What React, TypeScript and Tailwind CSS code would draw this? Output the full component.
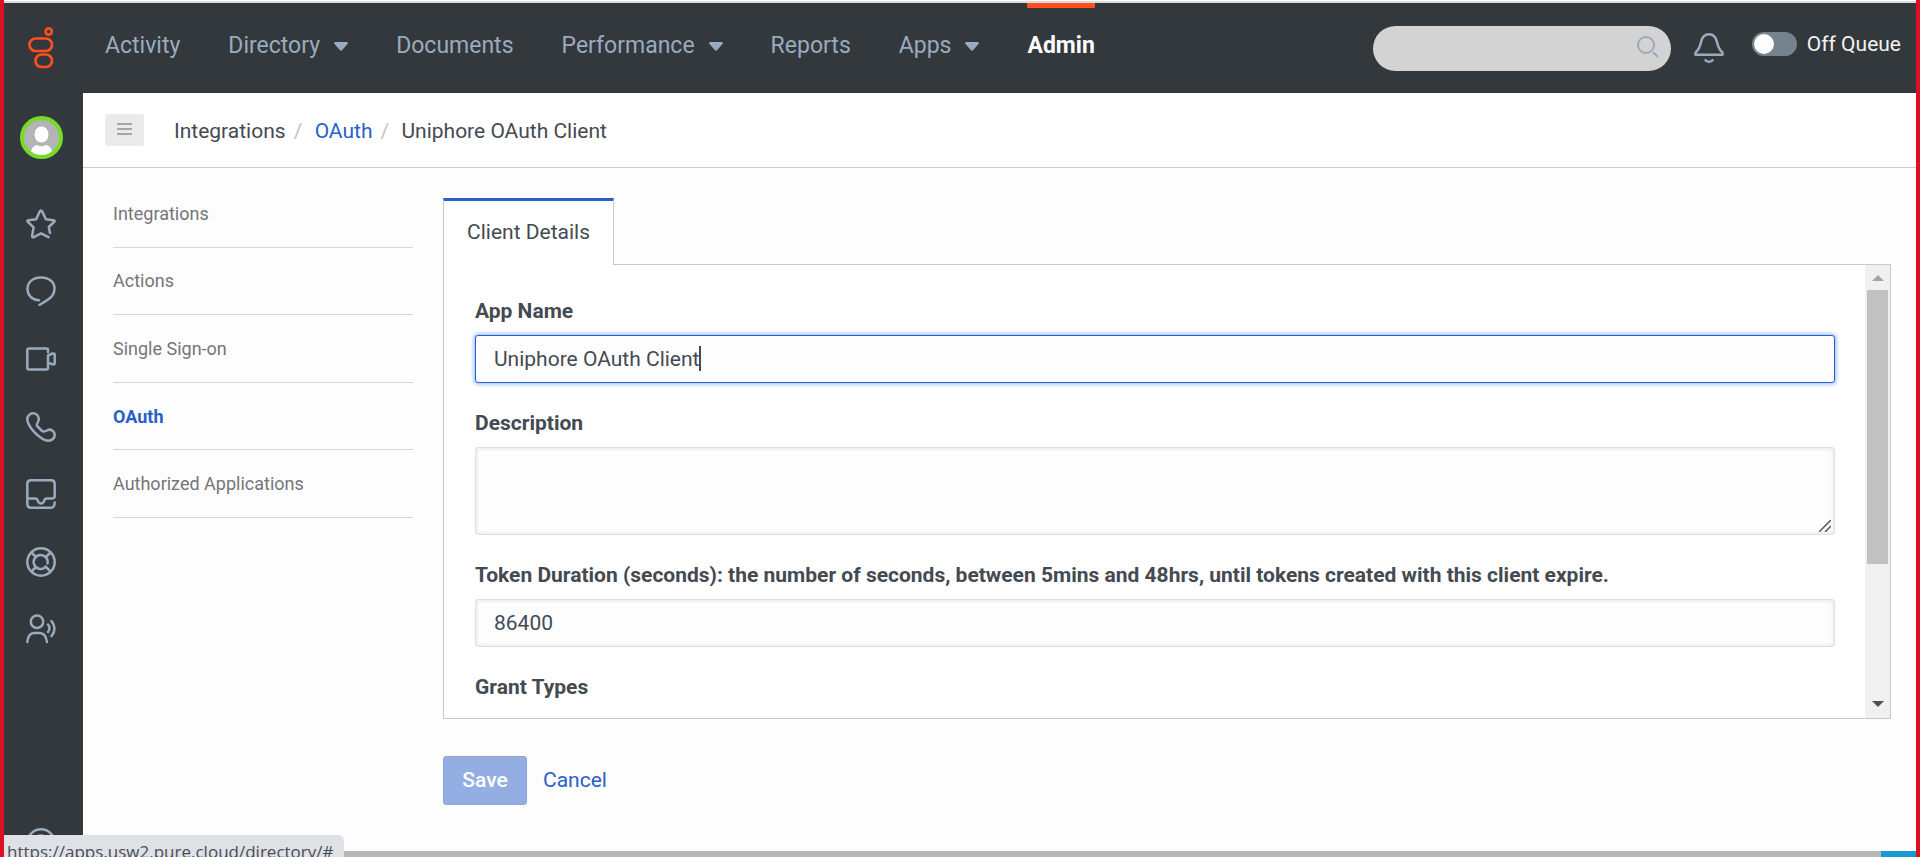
import { useState } from "react"
import type { ReactNode } from "react"

const navItems = [
  { label: "Activity" },
  { label: "Directory", menu: true },
  { label: "Documents" },
  { label: "Performance", menu: true },
  { label: "Reports" },
  { label: "Apps", menu: true },
  { label: "Admin", active: true },
]

const sections = ["Integrations", "Actions", "Single Sign-on", "OAuth", "Authorized Applications"]

const railIcons: { name: string; art: ReactNode }[] = [
  {
    name: "Favorites",
    art: (
      <path d="M24 24L22.8 18L28 13Q29.5 11.5 27.5 11.2L19.8 10.2L16.3 2.5Q15 .5 13.7 2.5L10.2 10.2L2.5 11.2Q.5 11.6 2 13L7.6 18.4L6.2 26.5Q6 29 8.2 28L15 24.3L22.5 28.2" />
    ),
  },
  {
    name: "Chat",
    art: <path d="M13 24.2C6 24 1.5 19 1.5 13C1.5 6 7 1.5 15 1.5S28.5 6 28.5 12.5C28.5 17.5 26 21 22.5 23.3L13.5 29" />,
  },
  {
    name: "Video",
    art: (
      <path d="M22 8V6Q22 4.5 20.5 4.5H3Q1.3 4.5 1.3 6V24Q1.3 25.5 3 25.5H20.5Q22 25.5 22 24V11.5L26.5 9.5Q28.7 9 28.7 11V19Q28.7 21 26.8 20.3L22 18.5" />
    ),
  },
  {
    name: "Calls",
    art: (
      <path d="M1.3 7C1.3 15 15 28.7 22.5 28.7C26 28.7 28.7 26 28.7 23C28.7 19 24.5 16.5 21.5 18.2C19 19.7 17.5 20.5 15.5 18.5L11.2 14.2C9.5 12.5 12.8 10.5 12.8 7C12.8 3.5 10 1.3 7 1.3C4 1.3 1.3 4 1.3 7Z" />
    ),
  },
  {
    name: "Inbox",
    art: (
      <path d="M1.3 19.5H9.5Q11 19.5 11.5 21Q12.5 24.5 15 24.5Q17.5 24.5 18.5 21Q19 19.5 20.5 19.5H26Q28.7 19.5 28.7 17V5Q28.7 1.3 25 1.3H5Q1.3 1.3 1.3 5V25Q1.3 28.7 5 28.7H25Q28.7 28.7 28.7 23.5" />
    ),
  },
  {
    name: "Help desk",
    art: (
      <>
        <circle cx="15" cy="15" r="13.7" />
        <path d="M21.5 16.5A7 7 0 1 0 19 20.5" />
        <path d="M5.5 5.5L10 10M24.5 5.5L20 10M5.5 24.5L10 20M24.5 24.5L19.5 19.5" />
      </>
    ),
  },
  {
    name: "Conversations",
    art: (
      <>
        <circle cx="11" cy="7.8" r="6.2" />
        <path d="M1.3 28C2 22 4 19 8 19H14C18 19 20 22 21 28M22 10.5Q25 14 22 18M25.5 7Q31.5 14.5 25.5 22" />
      </>
    ),
  },
]

function Field({ id, label, children }: { id: string; label: string; children: ReactNode }) {
  return (
    <div className="mb-6">
      <label htmlFor={id} className="mb-2 block font-bold leading-8">
        {label}
      </label>
      {children}
    </div>
  )
}

function Separator() {
  return <span className="w-[29px] pl-2 text-[#c4c4c4]">/</span>
}

export default function App() {
  const [appName, setAppName] = useState("Uniphore OAuth Client")
  const [description, setDescription] = useState("")
  const [duration, setDuration] = useState("86400")
  const [onQueue, setOnQueue] = useState(false)

  return (
    <div className="relative flex h-screen min-h-[600px] flex-col overflow-hidden border-x-4 border-[#db1020] bg-[#fdfdfd] font-[Roboto,sans-serif] text-[21px] text-[#444a52]">
      <div className="h-[3px] shrink-0 border-t border-white bg-[#dcdcdc]" />

      <header className="flex h-[90px] shrink-0 items-start bg-[#33383d]">
        <a href="#" aria-label="Home" className="mt-6 ml-6 block w-[77px]">
          <svg width="26" height="42" viewBox="0 0 26 42" fill="none" stroke="#ff4f1f" strokeWidth="2.7">
            <circle cx="20.700" cy="4.500" r="3.100" />
            <rect x="1.500" y="11.500" width="22.500" height="12.500" rx="6.200" />
            <rect x="7.500" y="27.500" width="16.500" height="12.500" rx="6.200" />
          </svg>
        </a>
        <nav className="flex h-full gap-12 text-[23px]">
          {navItems.map((item) => (
            <a
              key={item.label}
              href="#"
              className={
                item.active
                  ? "h-full border-t-[5px] border-[#ff4f1f] pt-5 font-bold leading-9 text-white"
                  : "flex h-full items-start gap-[14px] border-t-[5px] border-transparent pt-5 leading-9 text-[#9aabbd]"
              }
            >
              {item.label}
              {item.menu && (
                <svg width="14" height="9" viewBox="0 0 14 9" fill="currentColor" className="mt-[14px]">
                  <path d="M1 0H13Q14.500 .5 13.500 2L8 8.300Q7 9.200 6 8.300L.5 2Q-.5 .5 1 0Z" />
                </svg>
              )}
            </a>
          ))}
        </nav>

        <div className="ml-auto flex items-start pr-[15px]">
          <div className="relative mt-[23px]">
            <input
              type="search"
              aria-label="Search"
              className="block h-[45px] w-[298px] rounded-full bg-[#d3d3d3] px-5 outline-none"
            />
            <svg
              className="absolute top-[10px] right-3"
              width="22"
              height="22"
              viewBox="0 0 22 22"
              fill="none"
              stroke="#9aabbd"
              strokeWidth="2"
            >
              <circle cx="9" cy="9" r="8" />
              <path d="M16 16L21 21" />
            </svg>
          </div>
          <button aria-label="Notifications" className="mt-[30px] ml-[23px]">
            <svg width="30" height="31" viewBox="0 0 30 31" fill="none" stroke="#9aabbd" strokeWidth="2.5" strokeLinejoin="round">
              <path d="M15 1.300C10 1.300 8 4.500 7 9C6 14 5 16.500 1.500 19.500V21.800H28.500V19.500C25 16.500 24 14 23 9C22 4.500 20 1.300 15 1.300Z" />
              <path d="M10.800 26.500Q15 31.500 19.200 26.500" />
            </svg>
          </button>
          <label className="mt-[25px] ml-7 flex items-center gap-[10px] leading-8 text-[#f2f2f2]">
            <input
              type="checkbox"
              checked={onQueue}
              onChange={(e) => setOnQueue(e.target.checked)}
              className="h-6 w-[45px] appearance-none rounded-full bg-[#75828f] p-[2px] before:block before:size-5 before:rounded-full before:bg-[#fdfdfd] checked:before:ml-auto"
            />
            Off Queue
          </label>
        </div>
      </header>

      <div className="flex min-h-0 flex-1">
        <aside className="flex w-[79px] shrink-0 flex-col items-center overflow-hidden bg-[#33383d] pt-[23px] pr-[5px]">
          <button aria-label="Profile" className="size-[43px] shrink-0 overflow-hidden rounded-full border-4 border-[#76dc26] bg-[#b4b4b4]">
            <svg viewBox="0 0 35 35" fill="#fff">
              <ellipse cx="17.500" cy="14.500" rx="7" ry="8" />
              <path d="M6.500 35Q7 26 13 25Q17.500 27.500 22 25Q28 26 28.500 35Z" />
            </svg>
          </button>
          <nav className="mt-[31px] flex h-[473px] shrink-0 flex-col">
            {railIcons.map((icon) => (
              <a key={icon.name} href="#" aria-label={icon.name} className="flex flex-1 items-center">
                <svg
                  width="30"
                  height="30"
                  viewBox="0 0 30 30"
                  fill="none"
                  stroke="#9aabbd"
                  strokeWidth="2.5"
                  strokeLinecap="round"
                  strokeLinejoin="round"
                >
                  {icon.art}
                </svg>
              </a>
            ))}
          </nav>
          <a href="#" aria-label="Help" className="-mb-px mt-auto shrink-0">
            <svg className="block" width="30" height="30" viewBox="0 0 30 30" fill="none" stroke="#9aabbd" strokeWidth="2.5">
              <circle cx="15" cy="15" r="13.7" />
              <path d="M10.500 12Q11 7.500 15 7.500T19.500 12Q19.500 15 15 17.500V19" />
            </svg>
          </a>
        </aside>

        <div className="flex min-w-0 flex-1 flex-col">
          <div className="flex h-[75px] shrink-0 items-start border-b border-[#cccccc] bg-white pl-[22px]">
            <button aria-label="Toggle menu" className="mt-[21px] mr-[30px] flex h-8 w-[39px] justify-center rounded-[3px] bg-[#eaeaea] pt-2">
              <svg width="15" height="14" viewBox="0 0 15 14" fill="none" stroke="#a6a6a6" strokeWidth="2">
                <path d="M0 2H15M0 7H15M0 12H15" />
              </svg>
            </button>
            <div className="mt-[22px] flex leading-8">
              <span>Integrations</span>
              <Separator />
              <a href="#" className="text-[#2a60c8]">
                OAuth
              </a>
              <Separator />
              <span>Uniphore OAuth Client</span>
            </div>
          </div>

          <div className="flex min-h-0 flex-1 pr-[25px] pl-[30px]">
            <nav className="mt-3 flex h-[338px] w-[300px] shrink-0 flex-col text-[18px]">
              {sections.map((s) => (
                <a
                  key={s}
                  href="#"
                  className={
                    s === "OAuth"
                      ? "flex flex-1 items-center border-b border-[#d6d6d6] font-bold text-[#2a60c8]"
                      : "flex flex-1 items-center border-b border-[#d6d6d6] text-[#75757a]"
                  }
                >
                  {s}
                </a>
              ))}
            </nav>

            <main className="ml-[30px] flex min-w-0 flex-1 flex-col pt-[30px] pb-[52px]">
              <button className="relative z-10 -mb-px h-[67px] w-[171px] shrink-0 border-x border-t-3 border-x-[#c8c8c8] border-t-[#2a60c8] bg-white">
                Client Details
              </button>
              <div className="flex min-h-0 flex-1 border border-[#c8c8c8] bg-white">
                <form id="client" className="min-w-0 flex-1 overflow-hidden pt-[30px] pr-[30px] pl-[31px]">
                  <Field id="app-name" label="App Name">
                    <div className="relative">
                      <input
                        id="app-name"
                        value={appName}
                        onChange={(e) => setAppName(e.target.value)}
                        className="block h-12 w-full rounded-[3px] border border-[#2a60c8] bg-[#fdfdfd] px-[18px] caret-transparent shadow-[0_0_4px_1px_#8ab4ff] outline-none"
                      />
                      <span className="absolute top-[11px] left-[224px] h-[25px] w-[2px] bg-[#444a52]" />
                    </div>
                  </Field>
                  <Field id="description" label="Description">
                    <div className="relative">
                      <textarea
                        id="description"
                        value={description}
                        onChange={(e) => setDescription(e.target.value)}
                        className="block h-[88px] w-full resize-none rounded-[3px] border border-[#dbe0e6] bg-[#fdfdfd] px-[18px] py-2 shadow-[inset_0_0_4px_#d8dce0] outline-none"
                      />
                      <svg className="absolute right-1 bottom-[3px]" width="12" height="12" viewBox="0 0 12 12" stroke="#555" strokeWidth="1.5">
                        <path d="M0 12L12 0M6 12L12 6" />
                      </svg>
                    </div>
                  </Field>
                  <Field id="duration" label="Token Duration (seconds): the number of seconds, between 5mins and 48hrs, until tokens created with this client expire.">
                    <input
                      id="duration"
                      value={duration}
                      onChange={(e) => setDuration(e.target.value)}
                      className="block h-12 w-full rounded-[3px] border border-[#dbe0e6] bg-[#fdfdfd] px-[18px] shadow-[inset_0_0_4px_#d8dce0] outline-none"
                    />
                  </Field>
                  <h2 className="font-bold leading-8">Grant Types</h2>
                </form>
                <div className="flex w-[25px] flex-col items-center bg-[#f0f0f0] pt-[10px] pb-[11px]">
                  <svg width="12" height="6" viewBox="0 0 12 6" fill="#a3a3a3">
                    <path d="M6 0L12 6H0Z" />
                  </svg>
                  <div className="mt-[9px] h-[274px] w-[21px] bg-[#c1c1c1]" />
                  <svg className="mt-auto" width="12" height="6" viewBox="0 0 12 6" fill="#505050">
                    <path d="M0 0H12L6 6Z" />
                  </svg>
                </div>
              </div>
              <div className="mt-[37px] flex shrink-0 items-center gap-4">
                <button form="client" disabled className="h-[49px] w-[84px] rounded-[3px] border border-[#8ea6d6] bg-[#94aee4] font-medium text-white">
                  Save
                </button>
                <button className="text-[#2a60c8]">Cancel</button>
              </div>
            </main>
          </div>
        </div>
      </div>

      <footer className="absolute inset-x-0 bottom-0">
        <div className="flex h-[6px] bg-[#b7b7b7]">
          <div className="ml-auto w-[35px] bg-[#1a98d0]" />
        </div>
        <div className="absolute bottom-0 left-0 h-[22px] w-[340px] overflow-hidden rounded-tr-md bg-[#dee1e6] pt-[3px] pl-[3px] font-['Open_Sans',sans-serif] text-[17px] leading-7 text-[#4a4d51]">
          https://apps.usw2.pure.cloud/directory/#
        </div>
      </footer>
    </div>
  )
}
